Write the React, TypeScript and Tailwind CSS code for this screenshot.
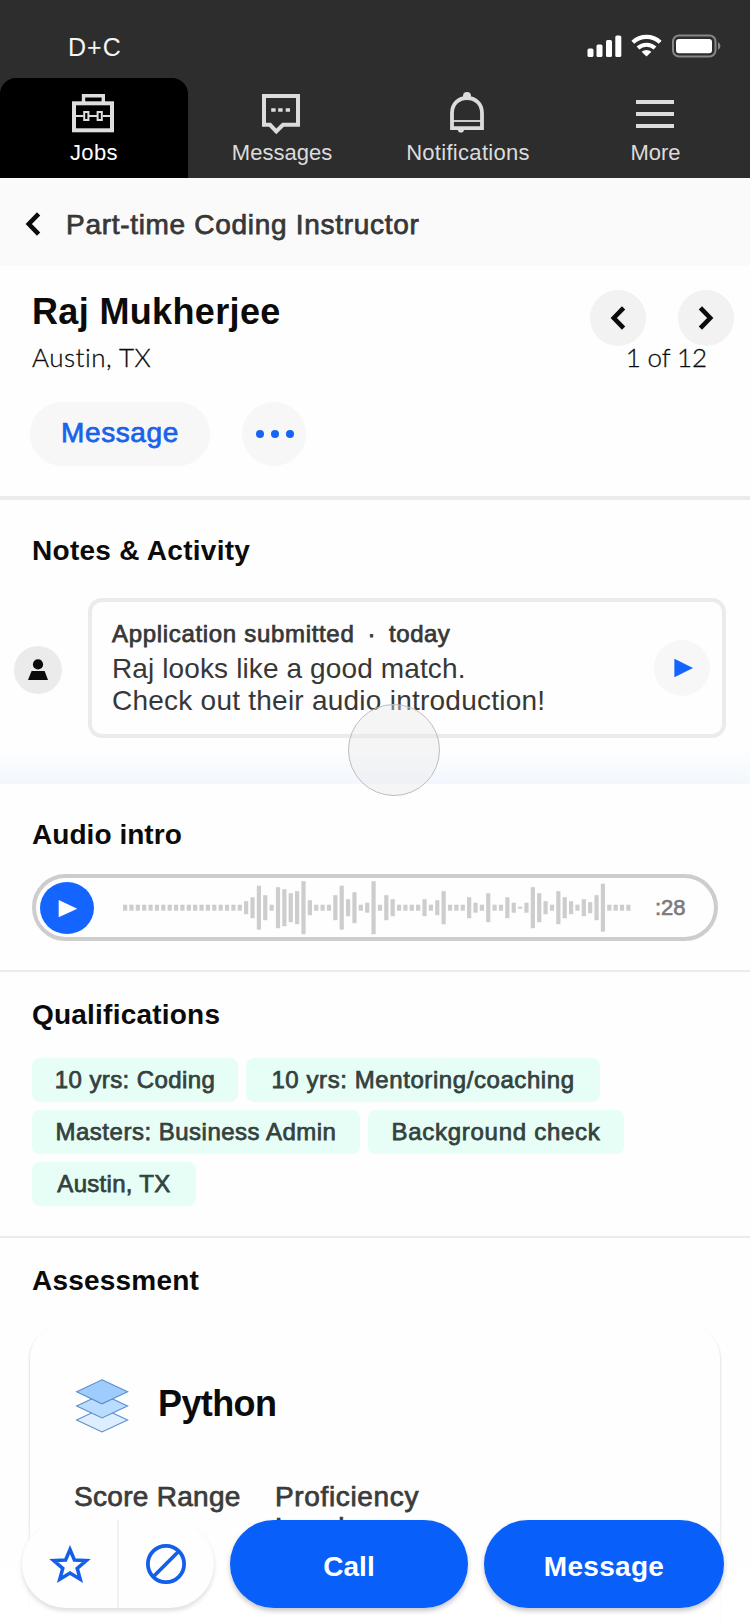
import React from "react";

const SANS = "font-['Liberation_Sans',Arial,sans-serif]";
const MEDIUM = "[-webkit-text-stroke:0.75px_currentColor]";

const WAVE: number[] = [
  ...Array(19).fill(6),
  13, 21, 44, 25, 6, 41, 37, 29, 33, 53, 15, 6, 6, 6, 25, 44, 17, 31, 6, 10, 53,
  6, 25, 17, 6, 6, 6, 6, 17, 6, 15, 33, 6, 6, 6, 21, 10, 6, 29, 6, 6, 21, 10, 2,
  10, 41, 29, 13, 6, 33, 21, 13, 6, 17, 11, 25, 48, 6, 6, 6, 6,
];

function StatusBar() {
  return (
    <div className="flex h-[78px] shrink-0 items-start justify-between bg-[#2d2d2d] pt-[33px] pl-[68px] text-[#f4f4f4]">
      <span className="text-[25px] leading-[28px] tracking-[1px]">D+C</span>
      <svg width="170" height="30" viewBox="580 33 170 30" fill="#fff">
        <rect x="587.5" y="48.5" width="6" height="8.5" rx="1.6" />
        <rect x="596.5" y="44.5" width="6" height="12.5" rx="1.6" />
        <rect x="606" y="40" width="6" height="17" rx="1.6" />
        <rect x="615.3" y="35.5" width="6" height="21.5" rx="1.6" />
        <g fill="none" stroke="#fff" strokeWidth="4.2">
          <path d="M632.8 42.2 A20.5 20.5 0 0 1 660.2 42.2" />
          <path d="M638 48 A12.7 12.7 0 0 1 655 48" />
        </g>
        <path d="M646.5 56.6 L641.6 51.8 A7.2 7.2 0 0 1 651.4 51.8 Z" />
        <rect x="673" y="35.5" width="42.5" height="21" rx="6" fill="none" stroke="#878787" strokeWidth="2" />
        <rect x="676" y="39" width="36" height="14.3" rx="3" />
        <path d="M718 42 a4.5 4.5 0 0 1 0 8 Z" fill="#878787" />
      </svg>
    </div>
  );
}

function Tabs() {
  return (
    <nav className="flex h-[100px] shrink-0 bg-[#2d2d2d] text-[22px] leading-[25px] text-[#dcdcdc]">
      <div className="flex w-[188px] flex-col items-center rounded-t-[16px] bg-black">
        <svg width="188" height="62" viewBox="0 78 188 62" fill="none" stroke="#dedede">
          <path d="M83.5 102 V95.7 H103.3 V102" strokeWidth="3.4" />
          <rect x="74" y="103.3" width="38" height="27" strokeWidth="4" />
          <path d="M75 116 H83.5 M89 116 H97.5 M103 116 H111" strokeWidth="1.8" />
          <rect x="84.2" y="112" width="4.2" height="8" strokeWidth="2" />
          <rect x="97.6" y="112" width="4.2" height="8" strokeWidth="2" />
        </svg>
        <span className="tracking-[0.4px] text-white">Jobs</span>
      </div>
      <div className="flex w-[187px] flex-col items-center">
        <svg width="187" height="62" viewBox="188 78 187 62" fill="none" stroke="#dcdcdc">
          <path d="M264 96 H298 V124.8 H283 L276.3 131.4 L270 124.8 H264 Z" strokeWidth="4" />
          <path d="M271.2 110 H275.6 M278.2 110 H282.6 M285.7 110 H290" strokeWidth="3.6" />
        </svg>
        <span className="pl-px">Messages</span>
      </div>
      <div className="flex w-[188px] flex-col items-center pr-[2px]">
        <svg className="-mr-[2px]" width="188" height="62" viewBox="375 78 188 62" fill="none" stroke="#dcdcdc">
          <path d="M452 128.2 V113 C452 103.5 459 98 467 98 C475 98 482 103.5 482 113 V128.2 Z" strokeWidth="3.8" />
          <path d="M452 121 H482" strokeWidth="1.8" />
          <circle cx="467" cy="96" r="4" fill="#dcdcdc" stroke="none" />
          <path d="M457.8 129.5 a3.1 3.1 0 0 0 6.2 0 Z" fill="#dcdcdc" stroke="none" />
        </svg>
        <span className="tracking-[0.3px]">Notifications</span>
      </div>
      <div className="flex w-[187px] flex-col items-center">
        <svg width="187" height="62" viewBox="563 78 187 62" fill="#dcdcdc">
          <rect x="636" y="100" width="38" height="4" />
          <rect x="636" y="112" width="38" height="4" />
          <rect x="636" y="124" width="38" height="4" />
        </svg>
        <span className="pr-[2px]">More</span>
      </div>
    </nav>
  );
}

function Chevron({ right = false, className = "" }: { right?: boolean; className?: string }) {
  return (
    <svg className={className} width="16" height="24" viewBox="0 0 16 24" fill="none" stroke="#0b0b0b" strokeWidth="4.6">
      <path d={right ? "M2.4 1.8 L12.2 12 L2.4 22.2" : "M13.6 1.8 L3.8 12 L13.6 22.2"} />
    </svg>
  );
}

const LIGHT = "font-['Lato',sans-serif] text-[26px] leading-[32px] font-light text-[#0b0b0b] [-webkit-text-stroke:0.3px_currentColor]";

function Profile() {
  return (
    <section className="flex h-[234px] shrink-0 justify-between border-b-4 border-[#ebebeb]">
      <div className="flex flex-col pt-[25px] pl-[30px]">
        <h1 className="pl-[2px] text-[36px] leading-[41px] font-bold tracking-[0.35px] text-[#0b0b0b]">Raj Mukherjee</h1>
        <p className={`mt-[9px] pl-[2px] tracking-[0.5px] ${LIGHT}`}>Austin, TX</p>
        <div className="mt-[29px] flex gap-8">
          <button className={`flex h-16 w-[180px] items-start justify-center rounded-full bg-[#f7f7f7] pt-[15px] text-[28px] leading-[31px] tracking-[0.6px] text-[#1863ea] ${MEDIUM}`}>
            Message
          </button>
          <button className="flex size-16 items-center justify-center gap-[7px] rounded-full bg-[#f7f7f7] pl-0.5">
            <i className="size-2 rounded-full bg-[#1464f6]" />
            <i className="size-2 rounded-full bg-[#1464f6]" />
            <i className="size-2 rounded-full bg-[#1464f6]" />
          </button>
        </div>
      </div>
      <div className="flex flex-col items-end pt-6 pr-4">
        <div className="flex gap-8">
          <button className="flex size-14 items-center justify-center rounded-full bg-[#f2f2f2]">
            <Chevron />
          </button>
          <button className="flex size-14 items-center justify-center rounded-full bg-[#f2f2f2]">
            <Chevron right />
          </button>
        </div>
        <p className={`relative -mt-[5px] mr-[27px] tracking-[-0.1px] ${LIGHT}`}>1 of 12</p>
      </div>
    </section>
  );
}

function Notes() {
  return (
    <section className="flex h-[284px] shrink-0 flex-col bg-linear-to-b from-[#fefefe] from-88% to-[#f2f7fd] pt-[35px]">
      <h2 className="pl-8 text-[28px] leading-[31px] font-bold tracking-[0.28px] text-[#0b0b0b]">Notes &amp; Activity</h2>
      <div className="mt-8 flex items-start pl-[14px]">
        <svg className="mt-12" width="48" height="48" viewBox="0 0 48 48" fill="#0b0b0b">
          <circle cx="24" cy="24" r="24" fill="#ebebeb" />
          <circle cx="24" cy="18.4" r="5.1" />
          <path d="M17.6 25 H30.6 L34 34 H14 Z" />
        </svg>
        <div className="ml-[26px] flex h-[140px] w-[638px] justify-between rounded-[14px] border-4 border-[#ebebeb] bg-[#fefefe] pr-3 pl-5 text-[#373737]">
          <div className="pt-[18px]">
            <p className={`flex gap-[13px] text-[24px] leading-[27px] tracking-[0.68px] ${MEDIUM}`}>
              <span>Application submitted</span>
              <span>·</span>
              <span className="tracking-[0.5px]">today</span>
            </p>
            <p className="mt-[6px] text-[28px] leading-[32px] tracking-[0.12px]">
              Raj looks like a good match.
              <br />
              <span className="tracking-[0.24px]">Check out their audio introduction!</span>
            </p>
          </div>
          <svg className="mt-[38px]" width="56" height="56" viewBox="0 0 56 56">
            <circle cx="28" cy="28" r="28" fill="#f7f7f7" />
            <path d="M20.4 18.8 L39 28 L20.4 37.2 Z" fill="#1464ff" />
          </svg>
        </div>
      </div>
    </section>
  );
}

function AudioIntro() {
  return (
    <section className="flex h-[188px] shrink-0 flex-col border-b-2 border-[#ebebeb] pt-[35px] pl-8">
      <h2 className="text-[28px] leading-[31px] font-bold tracking-[0.05px] text-[#0b0b0b]">Audio intro</h2>
      <div className="mt-6 flex h-[67px] w-[686px] items-center rounded-full border-4 border-[#cdcdcd] pl-1">
        <svg width="54" height="52" viewBox="0 0 54 52">
          <ellipse cx="27" cy="26" rx="27" ry="26" fill="#1464ff" />
          <path d="M18.7 18 L37.3 26.7 L18.7 35.3 Z" fill="#fff" />
        </svg>
        <svg className="ml-[29px]" width="508" height="54" viewBox="0 0 508 54" fill="#cdcdcd">
          {WAVE.map((h, i) => (
            <rect key={i} x={i * 6.371} y={26.7 - h / 2} width="4.2" height={h} />
          ))}
        </svg>
        <span className="-mt-[1px] ml-6 text-[22px] leading-[25px] text-[#7c7c7c] [-webkit-text-stroke:0.7px_currentColor]">:28</span>
      </div>
    </section>
  );
}

function Qualifications() {
  const chip = `flex h-11 items-start justify-center rounded-lg bg-[#e6fef6] pt-2 text-[24px] leading-[27px] whitespace-nowrap text-[#35413d] ${MEDIUM}`;
  return (
    <section className="flex h-[266px] shrink-0 flex-col border-b-2 border-[#ebebeb] pt-[27px] pl-8">
      <h2 className="text-[28px] leading-[31px] font-bold tracking-[0.22px] text-[#0b0b0b]">Qualifications</h2>
      <div className="mt-7 flex flex-col gap-2">
        <div className="flex gap-2">
          <span className={`${chip} w-[206px] tracking-[0.4px]`}>10 yrs: Coding</span>
          <span className={`${chip} w-[354px] tracking-[0.58px]`}>10 yrs: Mentoring/coaching</span>
        </div>
        <div className="flex gap-2">
          <span className={`${chip} w-[328px] tracking-[0.5px]`}>Masters: Business Admin</span>
          <span className={`${chip} w-[256px] tracking-[0.72px]`}>Background check</span>
        </div>
        <span className={`${chip} w-[164px] tracking-[0.3px]`}>Austin, TX</span>
      </div>
    </section>
  );
}

function Assessment() {
  return (
    <section className="flex shrink-0 flex-col pt-[27px] pl-[30px]">
      <h2 className="pl-[2px] text-[28px] leading-[31px] font-bold tracking-[0.2px] text-[#0b0b0b]">Assessment</h2>
      <div className="mt-[30px] h-[330px] w-[690px] rounded-[32px] bg-[#fefefe] pl-[43px] shadow-[0_2px_3px_rgba(0,0,0,0.22)]">
        <div className="flex pt-[51px]">
          <svg width="58" height="60" viewBox="73 1377 58 60" stroke="#5a8fca" strokeWidth="1.1">
            <path d="M102 1408 L127.6 1420 L102 1432 L76.6 1420 Z" fill="#dceeff" />
            <path d="M102 1394 L127.6 1406 L102 1418 L76.6 1406 Z" fill="#b9dcff" />
            <path d="M102 1379.8 L127.6 1391.8 L102 1403.8 L76.6 1391.8 Z" fill="#9fccff" />
          </svg>
          <h3 className="mt-[6px] ml-[27px] text-[36px] leading-[41px] font-bold tracking-[-0.6px] text-[#0b0b0b]">Python</h3>
        </div>
        <div className={`mt-11 flex pl-px text-[28px] leading-[31px] text-[#3b3b3b] ${MEDIUM}`}>
          <span className="w-[201px] tracking-[0.3px]">Score Range</span>
          <span className="w-40 tracking-[0.65px]">Proficiency Level</span>
        </div>
      </div>
    </section>
  );
}

function ActionBar() {
  const solid =
    "flex h-[88px] items-start justify-center rounded-full bg-[#085ffa] pt-[31px] text-[28px] leading-[31px] font-bold text-white shadow-[0_3px_5px_rgba(0,0,0,0.22)]";
  return (
    <div className="absolute inset-x-0 bottom-0 flex h-[104px] bg-linear-to-b from-white/0 to-white/90 to-80% pl-[22px]">
      <div className="flex h-[88px] w-48 rounded-full bg-[#fefefe] shadow-[0_3px_4px_rgba(0,0,0,0.13)]">
        <svg width="192" height="88" viewBox="22 1520 192 88" fill="none" stroke="#145fea">
          <path d="M118 1520 V1608" stroke="#f2f2f2" strokeWidth="2" />
          <path
            d="M70 1549.5 L74.4 1560 L86.3 1560.6 L77.2 1568.3 L80.2 1579.2 L70 1573 L59.8 1579.2 L62.8 1568.3 L53.7 1560.6 L65.6 1560 Z"
            strokeWidth="3.5"
          />
          <circle cx="166" cy="1564" r="18.1" strokeWidth="3.8" />
          <path d="M153.5 1576.5 L178.5 1551.5" strokeWidth="3.8" />
        </svg>
      </div>
      <button className={`${solid} ml-4 w-[238px]`}>Call</button>
      <button className={`${solid} ml-4 w-60 tracking-[0.3px]`}>Message</button>
    </div>
  );
}

export default function App() {
  return (
    <div className={`relative flex h-[1624px] w-[750px] flex-col overflow-hidden bg-[#fefefe] ${SANS}`}>
      <StatusBar />
      <Tabs />
      <header className="flex h-[88px] shrink-0 items-start bg-[#fafafa] pl-[25px]">
        <Chevron className="mt-[34px]" />
        <span className={`mt-[31px] ml-[25px] text-[28px] leading-[31px] tracking-[0.7px] text-[#373737] ${MEDIUM}`}>
          Part-time Coding Instructor
        </span>
      </header>
      <Profile />
      <Notes />
      <AudioIntro />
      <Qualifications />
      <Assessment />
      <ActionBar />
      <div className="absolute top-[704px] left-[348px] size-[92px] rounded-full border border-[#bdbdbd] bg-[#e8e8e8]/40" />
    </div>
  );
}
